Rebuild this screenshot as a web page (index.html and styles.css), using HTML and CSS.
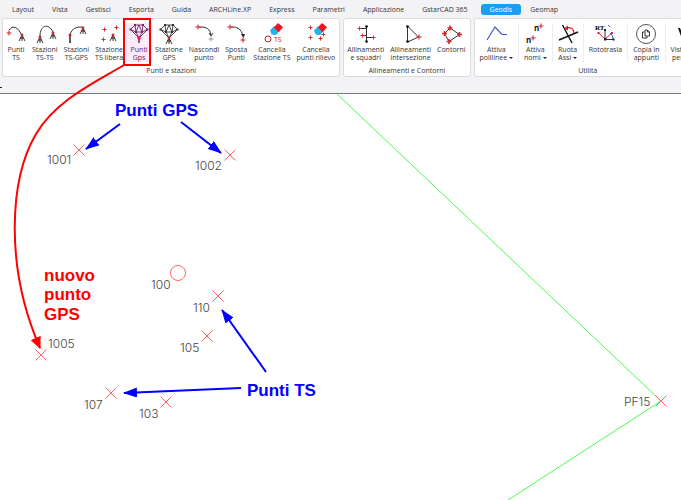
FILE: index.html
```html
<!DOCTYPE html>
<html lang="it">
<head>
  <meta charset="UTF-8" />
  <meta name="viewport" content="width=device-width, initial-scale=1.0"/>
  <title>Geodis - Punti GPS</title>
  <link rel="stylesheet" href="styles.css">
</head>
<body>
  <!-- Shared icon parts -->
  <svg class="defs" aria-hidden="true">
    <symbol id="plus" viewBox="-3 -3 6 6"><path d="M-2.5 0H2.5M0-2.5V2.5" stroke="#d8232a" stroke-width="1.1"/></symbol>
    <symbol id="tripod" viewBox="-4 -2 8 9"><path d="M0 0L-3 6M0 0V6M0 0L3 6M-2 3H2" stroke="#222" stroke-width=".9" fill="none"/><circle r="1.4" fill="#d8232a"/></symbol>
    <symbol id="eraser" viewBox="0 0 12 12"><path d="M3.5 3L8.5 7.5L5.5 11L1.5 10.5L0 7Z" fill="#1fb4ea"/><path d="M7.5 0L12 4L8 8.5L3.5 4Z" fill="#f5121d"/></symbol>
    <symbol id="gem" viewBox="0 0 24 22"><path d="M8 2H16L20.500 6.500L12 15L3.500 6.500ZM3.500 6.500L9 9L12 2L15 9L20.500 6.500M8 2L9 9H15L16 2M9 9L12 15L15 9" fill="none" stroke="currentColor" stroke-width=".9"/><path d="M7 1h2v2H7zM15 1h2v2h-2zM2.500 5.500h2v2h-2zM19.500 5.500h2v2h-2zM8 8h2v2H8zM14 8h2v2h-2z" fill="currentColor"/></symbol>
  </svg>

  <div class="app">
    <nav class="tabs">
      <a href="#">Layout</a>
      <a href="#">Vista</a>
      <a href="#">Gestisci</a>
      <a href="#">Esporta</a>
      <a href="#">Guida</a>
      <a href="#">ARCHLine.XP</a>
      <a href="#">Express</a>
      <a href="#">Parametri</a>
      <a href="#">Applicazione</a>
      <a href="#">GstarCAD 365</a>
      <a href="#" class="active">Geodis</a>
      <a href="#">Geomap</a>
    </nav>

    <div class="ribbon">
      <section class="group">
        <div class="tools">
          <button class="tool">
            <svg class="icon" viewBox="0 0 24 22"><path d="M5 7Q11-1 18 12" class="ink"/><use href="#plus" x="2" y="7" width="6" height="6"/><use href="#tripod" x="14" y="10" width="8" height="9"/></svg>
            <span>Punti<br>TS</span>
          </button>
          <button class="tool">
            <svg class="icon" viewBox="0 0 24 22"><path d="M7 13C7 3 15-1 20 9" class="ink"/><use href="#tripod" x="3" y="12" width="8" height="9"/><use href="#tripod" x="16" y="8" width="8" height="9"/></svg>
            <span>Stazioni<br>TS-TS</span>
          </button>
          <button class="tool">
            <svg class="icon" viewBox="0 0 24 22"><path d="M6 11Q9 3 19 4" class="ink"/><path d="M6 12V20" stroke="#222" stroke-width="1.5"/><circle cx="6" cy="12" r="1.5" fill="#d8232a"/><use href="#tripod" x="15" y="3" width="8" height="9"/></svg>
            <span>Stazioni<br>TS-GPS</span>
          </button>
          <button class="tool">
            <svg class="icon" viewBox="0 0 24 22"><use href="#plus" x="5" y="4" width="5" height="5"/><use href="#plus" x="17" y="2" width="5" height="5"/><use href="#plus" x="4" y="14" width="5" height="5"/><use href="#tripod" x="12" y="10" width="8" height="9"/></svg>
            <span>Stazione<br>TS libera</span>
          </button>
          <button class="tool selected">
            <svg class="icon" viewBox="0 0 24 22"><use href="#gem"/><path d="M12 15V20" stroke="#6b2465" stroke-width="1.500"/><circle cx="12" cy="15" r="1.800" fill="#f01828"/></svg>
            <span>Punti<br>Gps</span>
          </button>
          <button class="tool">
            <svg class="icon" viewBox="0 0 24 22"><use href="#gem"/><use href="#tripod" x="8" y="13" width="8" height="9"/></svg>
            <span>Stazione<br>GPS</span>
          </button>
          <button class="tool">
            <svg class="icon" viewBox="0 0 24 22"><path d="M7 4Q18 3 19 12M17 10L19 13L21 10" class="ink"/><use href="#plus" x="3" y="1" width="6" height="6"/><path d="M16.500 16H21.500M19 13.500V18.500" stroke="#999"/></svg>
            <span>Nascondi<br>punto</span>
          </button>
          <button class="tool">
            <svg class="icon" viewBox="0 0 24 22"><path d="M7 4Q17 3 19 13" class="ink"/><path d="M17 11L21 11L19.500 15Z" fill="#222"/><use href="#plus" x="3" y="1" width="6" height="6"/><use href="#plus" x="16" y="14" width="6" height="6"/></svg>
            <span>Sposta<br>Punti</span>
          </button>
          <button class="tool">
            <svg class="icon" viewBox="0 0 24 22"><use href="#eraser" x="10" y="0" width="13" height="13"/><circle cx="8" cy="16" r="3" fill="none" stroke="#c0272d"/><text x="14" y="19" class="ts">TS</text></svg>
            <span>Cancella<br>Stazione TS</span>
          </button>
          <button class="tool">
            <svg class="icon" viewBox="0 0 24 22"><use href="#eraser" x="10" y="0" width="13" height="13"/><use href="#plus" x="4" y="2" width="5" height="5"/><use href="#plus" x="4" y="12" width="5" height="5"/><use href="#plus" x="14" y="13" width="5" height="5"/><use href="#plus" x="17" y="9" width="5" height="5"/></svg>
            <span>Cancella<br>punti rilievo</span>
          </button>
        </div>
        <h2>Punti e stazioni</h2>
      </section>

      <section class="group">
        <div class="tools">
          <button class="tool">
            <svg class="icon" viewBox="0 0 24 22"><path d="M12.500 3V19M5 5.500H12M8 12.500H12M12 14.500H20" class="ink"/><circle cx="12.500" cy="3.500" r="1.300"/><circle cx="12.500" cy="18.500" r="1.300"/><use href="#plus" x="3" y="3" width="5" height="5"/><use href="#plus" x="6" y="10" width="5" height="5"/><use href="#plus" x="17" y="12" width="5" height="5"/></svg>
            <span>Allinamenti<br>e squadri</span>
          </button>
          <button class="tool">
            <svg class="icon" viewBox="0 0 24 22"><path d="M8.500 3V19L19.500 14Z" class="ink"/><circle cx="8.500" cy="3.500" r="1.300"/><circle cx="8.500" cy="18.500" r="1.300"/><use href="#plus" x="17" y="11" width="6" height="6"/></svg>
            <span>Allineamenti<br>intersezione</span>
          </button>
          <button class="tool">
            <svg class="icon" viewBox="0 0 24 22"><path d="M11 5L20.500 11.500L10 18.500L5.500 10.500Z" class="ink"/><path d="M11 2.500V7.500M8.500 5H13.500M18 11.500H23M20.500 9V14M7.500 18.500H12.500M10 16V21M3 10.500H8M5.500 8V13" stroke="#d8232a" stroke-width="1.600"/></svg>
            <span>Contorni</span>
          </button>
        </div>
        <h2>Allineamenti e Contorni</h2>
      </section>

      <section class="group split">
        <div class="tools">
          <button class="tool">
            <svg class="icon" viewBox="0 0 24 22"><path d="M3 17L11 4L18 11.500H23" fill="none" stroke="#4a55d8" stroke-width="1.200"/></svg>
            <span>Attiva<br>polilinee <i class="caret"></i></span>
          </button>
          <button class="tool">
            <svg class="icon" viewBox="0 0 24 22"><text x="11" y="8" class="n">n</text><text x="3" y="20" class="n">n</text><use href="#plus" x="15" y="0" width="6" height="6"/><use href="#plus" x="7" y="12" width="6" height="6"/></svg>
            <span>Attiva<br>nomi <i class="caret"></i></span>
          </button>
          <button class="tool">
            <svg class="icon" viewBox="0 0 24 22"><path d="M6.500 2L16 20M3 17L22 9" stroke="#111" stroke-width="1.400"/><path d="M10 5Q17 3 18 10" fill="none" stroke="#e01b24" stroke-width="1.300"/><path d="M8 5.500L12 2.500V7.500Z" fill="#e01b24"/></svg>
            <span>Ruota<br>Assi <i class="caret"></i></span>
          </button>
          <button class="tool">
            <svg class="icon" viewBox="0 0 24 22"><text x="2" y="7" class="rt">RT.</text><path d="M12 7V16.500H21" class="ink"/><path d="M12 16L5.500 10M12 16L19 10" stroke="#d8232a" stroke-width="1"/><path d="M17 10Q20 12 20 16M15 2L17 4" fill="none" stroke="#3b55d8"/><path d="M11 6h2v2h-2zM11 15h2.500v2.500H11zM19.500 15.500h2v2h-2z" fill="#222"/><path d="M4.500 9h2v2h-2zM18 9h2v2h-2z" fill="#d8232a"/></svg>
            <span>Rototrasla</span>
          </button>
          <button class="tool">
            <svg class="icon" viewBox="0 0 24 22"><circle cx="12" cy="11" r="9.500" fill="none" stroke="#555"/><path d="M11 7H13.500L15.500 9V13H11ZM13.500 7V9H15.500M10.500 9H8.500V15H13V13.500" fill="none" stroke="#333"/></svg>
            <span>Copia in<br>appunti</span>
          </button>
          <button class="tool">
            <svg class="icon" viewBox="0 0 24 22"><path d="M9 5L12 13L15 5" fill="none" stroke="#111" stroke-width="2"/></svg>
            <span>Vista in<br>persp.</span>
          </button>
        </div>
        <h2>Utilità</h2>
      </section>
    </div>

    <div class="docbar"></div>

    <main class="canvas">
      <svg class="lines" aria-hidden="true">
        <polyline points="337,0 661,307 508,406"/>
      </svg>
      <svg class="points">
        <defs>
          <path id="cross" d="M-5.500-5.500L5.500 5.500M-5.500 5.500L5.500-5.500"/>
        </defs>
        <use href="#cross" x="79" y="56"/><text x="47" y="70">1001</text>
        <use href="#cross" x="230" y="61"/><text x="195" y="76">1002</text>
        <circle cx="178" cy="179" r="7.500"/><text x="151" y="195">100</text>
        <use href="#cross" x="218" y="202"/><text x="193" y="218">110</text>
        <use href="#cross" x="207" y="242"/><text x="180" y="258">105</text>
        <use href="#cross" x="41" y="261"/><text x="48" y="254">1005</text>
        <use href="#cross" x="111" y="299"/><text x="84" y="315">107</text>
        <use href="#cross" x="166" y="308"/><text x="139" y="324">103</text>
        <use href="#cross" x="661" y="307"/><text x="624" y="312">PF15</text>
      </svg>
    </main>

    <!-- Notes drawn over the ribbon and the drawing -->
    <svg class="notes">
      <defs>
        <marker id="head" viewBox="0 0 14 10" refX="13" refY="5" markerWidth="14" markerHeight="10" markerUnits="userSpaceOnUse" orient="auto"><path d="M0 0L14 5L0 10Z"/></marker>
        <marker id="headRed" viewBox="0 0 12 11" refX="11" refY="5.500" markerWidth="12" markerHeight="11" markerUnits="userSpaceOnUse" orient="auto"><path d="M0 0L12 5.500L0 11Z"/></marker>
      </defs>
      <g class="red">
        <rect x="124" y="19" width="26" height="46"/>
        <path d="M124 65C96 82 56 100 36 134C10 178 4 265 40 348" marker-end="url(#headRed)"/>
        <text x="44" y="281">nuovo</text>
        <text x="44" y="300">punto</text>
        <text x="44" y="320">GPS</text>
      </g>
      <g class="blue">
        <path d="M120 124L86 149" marker-end="url(#head)"/>
        <path d="M181 122L221 153" marker-end="url(#head)"/>
        <path d="M266 372L222 310" marker-end="url(#head)"/>
        <path d="M241 388L124 393" marker-end="url(#head)"/>
        <text x="115" y="116">Punti GPS</text>
        <text x="247" y="396">Punti TS</text>
      </g>
    </svg>
  </div>
</body>
</html>
```
FILE: styles.css
```css
* {
  box-sizing: border-box;
  margin: 0;
  padding: 0;
}

body {
  font-family: "Open Sans", "Noto Sans", sans-serif;
  font-size: 7px;
  color: #333;
  background: #fff;
}

.defs {
  display: none;
}

.app {
  position: relative; /* Needed for the notes layer */
  display: flex;
  flex-direction: column;
  min-height: 100vh;
  overflow: hidden;
}

/* Menu tabs */
.tabs {
  display: flex;
  padding: 4px 3px 2px;
  background: #f3f3f6;
}

.tabs a {
  flex: none;
  padding: 0 9px;
  line-height: 11px;
  color: #333;
  text-decoration: none;
}

.tabs a.active {
  margin-left: 4px;
  background: #1b9df5;
  border-radius: 3px;
  color: #fff;
}

/* Ribbon */
.ribbon {
  display: flex;
  gap: 3px;
  padding: 1px 2px 2px;
  background: #f3f3f6;
}

.group {
  flex: none;
  background: #fff;
  border: 1px solid #dcdce0;
  border-radius: 3px;
}

.tools {
  display: flex;
  padding: 4px 1px 0 0;
}

.group h2 {
  padding: 4px 0 1px;
  font-size: 7px;
  font-weight: normal;
  line-height: 9px;
  text-align: center;
}

.tool {
  display: flex;
  flex-direction: column;
  align-items: center;
  gap: 1px;
  min-width: 25px;
  padding: 0 3px;
  border: none;
  background: none;
  font: inherit;
  line-height: 8px;
  color: #333;
  white-space: nowrap;
  cursor: pointer;
}

.tool.selected {
  background: #fbeafa;
  color: #6b2465;
}

.split .tool {
  padding: 0 5px;
  border-right: 1px solid #eee;
}

.icon {
  width: 24px;
  height: 22px;
  margin: 0 -2px;
}

.ink {
  fill: none;
  stroke: #333;
  stroke-width: 1;
}

.ts {
  font-size: 7px;
  fill: #c0272d;
}

.n {
  font-size: 8px;
  font-weight: bold;
  fill: #111;
}

.rt {
  font-family: "Liberation Serif", serif;
  font-size: 7px;
  font-weight: bold;
}

.caret {
  display: inline-block;
  border: 2px solid transparent;
  border-top-color: #222;
  border-bottom: none;
  vertical-align: middle;
}

.docbar {
  height: 15px;
  background: #f3f3f6;
  border-bottom: 1px solid #777;
}

.docbar::before {
  content: "";
  display: block;
  width: 2px;
  height: 8px;
  border-bottom: 1px solid #222;
}

/* Drawing area */
.canvas {
  display: grid;
  flex: 1;
}

.canvas svg {
  grid-area: 1 / 1;
  width: 100%;
  height: 100%;
}

.lines {
  fill: none;
  stroke: #4dfa4d;
}

.points {
  fill: none;
  stroke: #ff6464;
}

.points text {
  font-family: Inter, "Liberation Sans", sans-serif;
  font-size: 12px;
  font-weight: 300;
  fill: #444;
  stroke: none;
}

.notes {
  position: absolute;
  top: 0;
  left: 0;
  width: 100%;
  height: 100%;
  fill: none;
  pointer-events: none;
}

.notes text {
  font-family: "Liberation Sans", Arial, sans-serif;
  font-size: 17px;
  font-weight: bold;
  stroke: none;
}

.red {
  stroke: #f00;
  stroke-width: 2;
}

.blue {
  stroke: #00f;
  stroke-width: 2;
}

.red text,
#headRed path {
  fill: #f00;
  stroke: none;
}

.blue text,
#head path {
  fill: #00f;
  stroke: none;
}
```
